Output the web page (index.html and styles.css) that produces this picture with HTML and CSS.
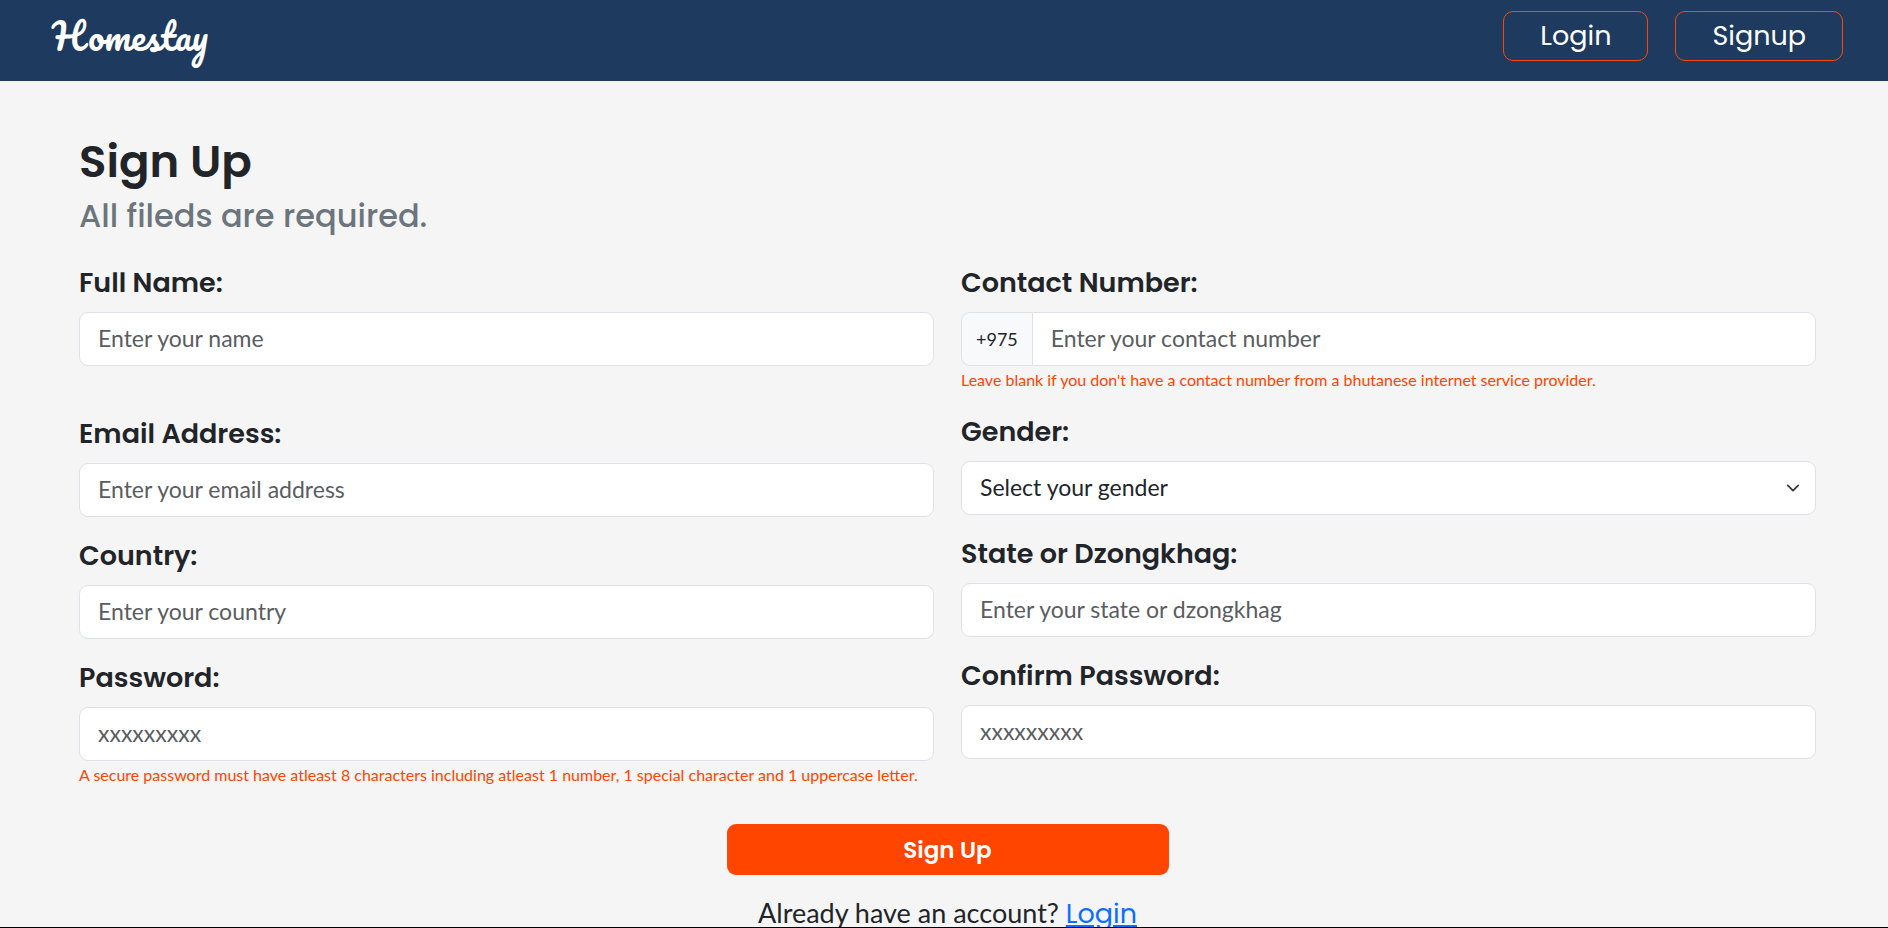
FILE: index.html
```html
<!DOCTYPE html>
<html lang="en">
<head>
<meta charset="utf-8">
<meta name="viewport" content="width=device-width, initial-scale=1">
<title>Homestay - Sign Up</title>
<link rel="stylesheet" href="styles.css">
</head>
<body>
<div class="page">
  <header class="navbar">
    <a class="brand" href="#">Homestay</a>
    <nav class="nav-actions">
      <a class="nav-button" href="#">Login</a>
      <a class="nav-button" href="#">Signup</a>
    </nav>
  </header>
  <main class="content">
    <h1 class="title">Sign Up</h1>
    <p class="subtitle">All fileds are required.</p>
    <form class="signup">
      <div class="columns">
        <div class="column">
          <div class="field field-spaced">
            <label class="label" for="name">Full Name:</label>
            <input class="control" id="name" type="text" placeholder="Enter your name">
          </div>
          <div class="field">
            <label class="label" for="email">Email Address:</label>
            <input class="control" id="email" type="email" placeholder="Enter your email address">
          </div>
          <div class="field">
            <label class="label" for="country">Country:</label>
            <input class="control" id="country" type="text" placeholder="Enter your country">
          </div>
          <div class="field">
            <label class="label" for="password">Password:</label>
            <input class="control" id="password" type="password" placeholder="xxxxxxxxx">
            <small class="hint">A secure password must have atleast 8 characters including atleast 1 number, 1 special character and 1 uppercase letter.</small>
          </div>
        </div>
        <div class="column">
          <div class="field">
            <label class="label" for="contact">Contact Number:</label>
            <div class="group">
              <span class="prefix">+975</span>
              <input class="control" id="contact" type="tel" placeholder="Enter your contact number">
            </div>
            <small class="hint">Leave blank if you don't have a contact number from a bhutanese internet service provider.</small>
          </div>
          <div class="field">
            <label class="label" for="gender">Gender:</label>
            <div class="select-wrap">
              <select class="control" id="gender">
                <option>Select your gender</option>
                <option>Male</option>
                <option>Female</option>
              </select>
              <svg class="chevron" viewBox="0 0 16 16" aria-hidden="true"><path d="m2 5 6 6 6-6"/></svg>
            </div>
          </div>
          <div class="field">
            <label class="label" for="state">State or Dzongkhag:</label>
            <input class="control" id="state" type="text" placeholder="Enter your state or dzongkhag">
          </div>
          <div class="field">
            <label class="label" for="confirm">Confirm Password:</label>
            <input class="control" id="confirm" type="password" placeholder="xxxxxxxxx">
          </div>
        </div>
      </div>
      <button class="submit" type="submit">Sign Up</button>
      <p class="switch">Already have an account? <a class="switch-link" href="#">Login</a></p>
    </form>
  </main>
</div>
</body>
</html>
```
FILE: styles.css
```css
* { box-sizing: border-box; }

body {
  margin: 0;
  background: #f5f5f5;
  color: #212529;
  font-family: Lato, sans-serif;
}

.page {
  height: 100vh;
  overflow: hidden;
  border-bottom: 1px solid #000;
}

.navbar {
  display: flex;
  justify-content: space-between;
  align-items: flex-start;
  padding: 11px 45px 20px 52px;
  background: #1e3a5f;
}

.brand {
  color: #fff;
  font-family: Pacifico, Lato, cursive;
  font-size: 36px;
  font-weight: 400;
  line-height: 50px;
  text-decoration: none;
}

.nav-actions { display: flex; gap: 27px; }

.nav-button {
  padding: 0 36px;
  border: 1px solid #ff4500;
  border-radius: 10px;
  color: #fff;
  font-family: Poppins, Inter, sans-serif;
  font-size: 27px;
  line-height: 48px;
  text-decoration: none;
}

.content { padding: 51px 72px 0 79px; }

.title {
  margin: 0;
  font-family: Poppins, Inter, sans-serif;
  font-size: 45px;
  font-weight: 600;
  line-height: 60px;
}

.subtitle {
  margin: 0 0 23px;
  color: #6c757d;
  font-family: Poppins, Inter, sans-serif;
  font-size: 32px;
  font-weight: 500;
  line-height: 48px;
}

.signup { display: flex; flex-direction: column; }

.columns {
  display: grid;
  grid-template-columns: 1fr 1fr;
  gap: 27px;
}

.column { display: flex; flex-direction: column; gap: 19px; }

.field { display: flex; flex-direction: column; }

.field-spaced { padding-bottom: 29px; }

.label {
  margin-bottom: 9px;
  font-family: Poppins, Inter, sans-serif;
  font-size: 27px;
  font-weight: 600;
  line-height: 40px;
}

.control {
  width: 100%;
  height: 54px;
  padding: 0 18px 2px;
  border: 1px solid #dee2e6;
  border-radius: 9px;
  background: #fff;
  color: #212529;
  font-family: inherit;
  font-size: 23px;
}

.control::placeholder { color: #5a5d61; opacity: 1; }

.group { display: flex; }

.group .control { border-radius: 0 9px 9px 0; }

.prefix {
  padding: 0 14px;
  border: 1px solid #dee2e6;
  border-right: 0;
  border-radius: 9px 0 0 9px;
  background: #f8f9fa;
  font-size: 18px;
  line-height: 52px;
}

.select-wrap { display: grid; align-items: center; }

.select-wrap .control { grid-area: 1 / 1; appearance: none; }

.chevron {
  grid-area: 1 / 1;
  justify-self: end;
  width: 14px;
  height: 14px;
  margin-right: 16px;
  fill: none;
  stroke: #343a40;
  stroke-width: 2;
  stroke-linecap: round;
  stroke-linejoin: round;
  pointer-events: none;
}

.hint {
  color: #ff4500;
  font-size: 16px;
  line-height: 27px;
}

.submit {
  align-self: center;
  width: 442px;
  max-width: 100%;
  height: 51px;
  margin-top: 36px;
  border: 0;
  border-radius: 9px;
  background: #ff4500;
  color: #fff;
  font-family: Poppins, Inter, sans-serif;
  font-size: 23px;
  font-weight: 600;
}

.switch {
  margin: 18px 0 0;
  font-size: 27px;
  line-height: 40px;
  text-align: center;
}

.switch-link {
  color: #0d6efd;
  font-family: Poppins, Inter, sans-serif;
}
```
